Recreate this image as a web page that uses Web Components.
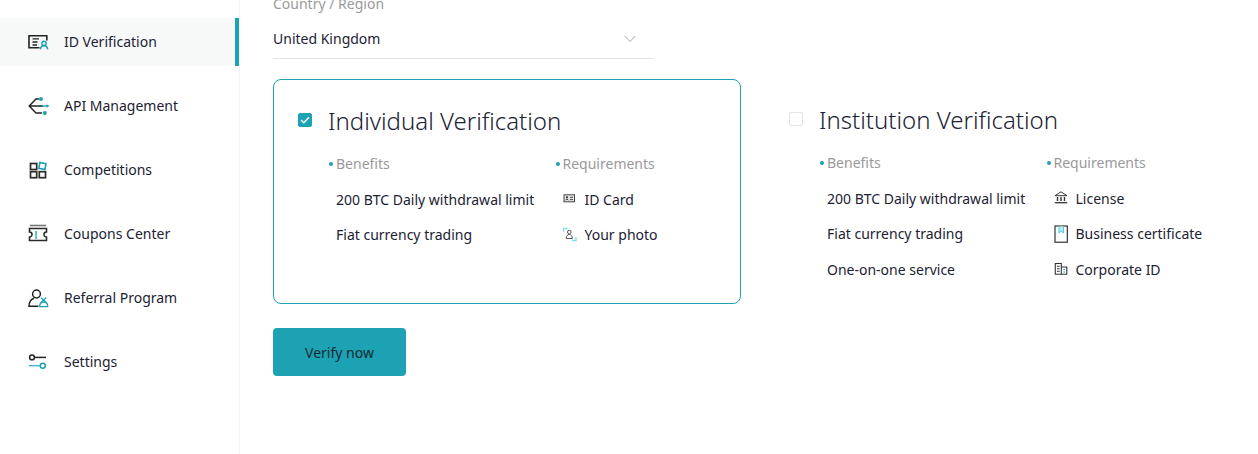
<!DOCTYPE html>
<html lang="en">
<head>
<meta charset="utf-8">
<title>ID Verification</title>
<style>
html,body{margin:0;height:454px;overflow:hidden;background:#fff;font-family:"Noto Sans",sans-serif;color:#1c2233;font-size:14px}
</style>
</head>
<body>
<kyc-app>
  <side-nav slot="nav">
    <nav-item active label="ID Verification"><svg viewBox="0 0 20 20" width="20" height="20" fill="none" overflow="visible"><path d="M11.500 15.800H1V3.800H18.800V8.500" stroke="#222" stroke-width="1.600"/><path d="M4.500 6.900H11M4.500 10H9.500M4.500 13H9" stroke="#222" stroke-width="1.400"/><circle cx="16" cy="11.300" r="2.100" stroke="#1da2b4" stroke-width="1.500"/><path d="M12.300 17.400c.2-2.400 1.700-3.700 3.700-3.700s3.500 1.300 3.700 3.700" stroke="#1da2b4" stroke-width="1.500"/></svg></nav-item>
    <nav-item label="API Management"><svg viewBox="0 0 20 20" width="20" height="20" fill="none" overflow="visible"><path d="M11 3H8L1.200 10 8 17H14M1.200 10H15" stroke="#222" stroke-width="1.400"/><path d="M14 10H19" stroke="#1da2b4" stroke-width="1.400"/><path d="M18.500 8.300 21.500 10 18.500 11.700Z" fill="#1da2b4"/><circle cx="13" cy="3" r="2" fill="#1da2b4"/><circle cx="16.800" cy="17" r="2" fill="#1da2b4"/></svg></nav-item>
    <nav-item label="Competitions"><svg viewBox="0 0 20 20" width="20" height="20" fill="none"><rect x="2.500" y="3.500" width="6.200" height="6" stroke="#2b2b2b" stroke-width="1.700"/><rect x="2.500" y="11.700" width="6.200" height="6" stroke="#2b2b2b" stroke-width="1.700"/><rect x="11.300" y="11.700" width="6.200" height="6" stroke="#2b2b2b" stroke-width="1.700"/><rect x="11.300" y="3" width="6.200" height="6" transform="rotate(10 14.400 6)" stroke="#1da2b4" stroke-width="1.600"/></svg></nav-item>
    <nav-item label="Coupons Center"><svg viewBox="0 0 20 20" width="20" height="20" fill="none"><path d="M2 1.500H18" stroke="#777" stroke-width="1.600"/><path d="M1.500 4.500H18.500V8a2.500 2.500 0 0 0 0 5V16.500H1.500V13a2.500 2.500 0 0 0 0-5Z" stroke="#2b2b2b" stroke-width="1.600"/><path d="M8 7V15" stroke="#1da2b4" stroke-width="1.300"/></svg></nav-item>
    <nav-item label="Referral Program"><svg viewBox="0 0 20 20" width="20" height="20" fill="none" overflow="visible"><circle cx="8.500" cy="6" r="3.900" stroke="#222" stroke-width="1.500"/><path d="M10.500 18.200H1c0-4.200 2.400-7.100 5-8" stroke="#222" stroke-width="1.500"/><path d="M13 9.800l5.200 4.700M18.200 9.800 13 14.500" stroke="#1da2b4" stroke-width="1.200"/><path d="M11.700 18.600c0-3 1.400-4.600 4-4.600s4 1.600 4 4.600Z" stroke="#1da2b4" stroke-width="1.300"/></svg></nav-item>
    <nav-item label="Settings"><svg viewBox="0 0 20 20" width="20" height="20" fill="none"><circle cx="4" cy="5.400" r="2.400" stroke="#222" stroke-width="1.500"/><path d="M6.500 5.400H18" stroke="#222" stroke-width="1.500"/><path d="M.8 13.700H12.300" stroke="#4fb8c6" stroke-width="1.500"/><circle cx="14.800" cy="13.700" r="2.500" stroke="#1da2b4" stroke-width="1.500"/></svg></nav-item>
  </side-nav>
  <country-select label="Country / Region" value="United Kingdom"></country-select>
  <verify-card selected title="Individual Verification">
    <benefit-list slot="benefits">
      <list-row>200 BTC Daily withdrawal limit</list-row>
      <list-row>Fiat currency trading</list-row>
    </benefit-list>
    <benefit-list slot="requirements">
      <list-row><svg slot="icon" viewBox="0 0 16 18" width="16" height="18" fill="none"><rect x="1" y="4.800" width="10.500" height="7" fill="#e6e6e6" stroke="#444" stroke-width="1"/><circle cx="4" cy="7.300" r="1.100" fill="#333"/><path d="M2.300 10.300c.3-1.300 3-1.300 3.300 0M7 7.300h3M7 9.600h3" stroke="#333" stroke-width=".9"/></svg>ID Card</list-row>
      <list-row><svg slot="icon" viewBox="0 0 16 18" width="16" height="18" fill="none"><path d="M.5 6V2.500H4.500M13 11V14.500H9" stroke="#7fdfe8" stroke-width="1.300"/><circle cx="6.300" cy="6" r="1.800" stroke="#555" stroke-width="1"/><path d="M3.300 12.500c0-2.400 1-4 3-4s3 1.600 3 4Z" stroke="#555" stroke-width="1"/></svg>Your photo</list-row>
    </benefit-list>
  </verify-card>
  <verify-card title="Institution Verification">
    <benefit-list slot="benefits">
      <list-row>200 BTC Daily withdrawal limit</list-row>
      <list-row>Fiat currency trading</list-row>
      <list-row>One-on-one service</list-row>
    </benefit-list>
    <benefit-list slot="requirements">
      <list-row><svg slot="icon" viewBox="0 0 16 18" width="16" height="18" fill="none"><path d="M7 2.800 1 6.700H13Z" stroke="#333" stroke-width="1"/><path d="M3.500 8V12M7 8V12M10.500 8V12" stroke="#333" stroke-width="1.400"/><path d="M.8 13.700H13.200" stroke="#333" stroke-width="1.300"/></svg>License</list-row>
      <list-row><svg slot="icon" viewBox="0 0 16 18" width="16" height="18" fill="none" overflow="visible"><rect x="1" y="1" width="12.300" height="16.200" stroke="#222" stroke-width="1.100"/><path d="M5 1.500V8L7.200 6 9.400 8V1.500" fill="#bdeff2" stroke="#3fd0d8" stroke-width="1"/></svg>Business certificate</list-row>
      <list-row><svg slot="icon" viewBox="0 0 16 18" width="16" height="18" fill="none"><path d="M1.300 14.200V3.500H7.300V14.200M7.300 7H12.800V14.200M.8 14.200H13.300" stroke="#333" stroke-width="1.100"/><path d="M3 6.300H5.600M3 8.800H5.600M3 11.300H5.600" stroke="#333" stroke-width="1"/><path d="M9.300 9.500H11M9.300 12H11" stroke="#1da2b4" stroke-width="1.200"/></svg>Corporate ID</list-row>
    </benefit-list>
  </verify-card>
  <primary-button slot="action">Verify now</primary-button>
</kyc-app>
<script>
function define(name, css, html, init){
  customElements.define(name, class extends HTMLElement{
    constructor(){
      super();
      const root=this.attachShadow({mode:"open"});
      root.innerHTML="<style>"+css+"</style>"+html;
    }
    connectedCallback(){ if(init) init(this, this.shadowRoot); }
  });
}
define("kyc-app",
 `:host{display:flex;height:454px;overflow:hidden}
  .main{flex:1;min-width:0;padding-left:33px;margin-top:-6px}
  .cards{display:flex;gap:24px;align-items:flex-start;margin-top:20px}
  .action{margin-top:24px}`,
 `<slot name="nav"></slot>
  <div class="main">
    <slot id="sel" name="select"></slot>
    <div class="cards"><slot></slot></div>
    <div class="action"><slot name="action"></slot></div>
  </div>`,
 (el)=>{ const s=el.querySelector("country-select"); if(s) s.slot="select"; });
define("side-nav",
 `:host{display:flex;flex-direction:column;gap:16px;box-sizing:border-box;width:240px;height:454px;padding-top:18px;border-right:1px solid #f3f4f4;flex:none}`,
 `<slot></slot>`);
define("nav-item",
 `:host{display:flex;align-items:center;gap:16px;height:48px;padding-left:28px;box-sizing:border-box;font-size:14px;color:#1c2233;line-height:20px}
  :host([active]){background:#f7f9f9;border-right:4px solid #1da2b4}
  .i{display:flex;width:20px;height:20px}`,
 `<span class="i"><slot></slot></span><span id="t"></span>`,
 (el,r)=>{ r.getElementById("t").textContent=el.getAttribute("label"); });
define("country-select",
 `:host{display:block;width:380px}
  .l{height:20px;line-height:20px;color:#9a9a9a;font-size:14px}
  .s{height:45px;box-sizing:border-box;border-bottom:1px solid #e3e3e3;display:flex;align-items:center;justify-content:space-between;padding:5px 17px 0 0;line-height:20px;color:#1c2233}
  svg{display:block}`,
 `<div class="l" id="l"></div><div class="s"><span id="v"></span><svg width="12" height="8" viewBox="0 0 12 8" fill="none"><path d="M.7 1 6 6.500 11.300 1" stroke="#a4a4a4" stroke-width="1"/></svg></div>`,
 (el,r)=>{ r.getElementById("l").textContent=el.getAttribute("label"); r.getElementById("v").textContent=el.getAttribute("value"); });
define("verify-card",
 `:host{display:block;box-sizing:border-box;width:466px;padding:24px 24px 0;min-height:224px;color:#1c2233}
  :host([selected]){width:468px;height:225px;border:1px solid #1da2b4;border-radius:8px}
  .h{display:flex;align-items:center;height:34px}
  .c{width:14px;height:14px;box-sizing:border-box;border:1px solid #e4e4e4;border-radius:2px;margin:0 16px 2px 0;flex:none;display:flex;align-items:center;justify-content:center}
  :host([selected]) .c{background:#1da2b4;border-color:#1da2b4}
  .c svg{display:none}
  :host([selected]) .c svg{display:block}
  .t{font-size:24px;font-weight:300;line-height:34px;color:#1c2233}
  .g{display:grid;grid-template-columns:226.5px 1fr;margin:8px 0 0 30px}`,
 `<div class="h"><span class="c"><svg width="10" height="8" viewBox="0 0 10 8" fill="none"><path d="M1 4 3.800 6.700 9 1.300" stroke="#fff" stroke-width="1.400"/></svg></span><span class="t" id="t"></span></div>
  <div class="g"><section-col head="Benefits"><slot name="benefits"></slot></section-col><section-col head="Requirements"><slot name="requirements"></slot></section-col></div>`,
 (el,r)=>{ r.getElementById("t").textContent=el.getAttribute("title"); });
define("section-col",
 `:host{display:block}
  .h{height:35.5px;line-height:36px;color:#9a9a9a;font-size:14px;display:flex;align-items:flex-start;white-space:nowrap}
  .d{width:4px;height:4px;border-radius:50%;background:#1da2b4;margin:16px 3px 0 1px;flex:none}`,
 `<div class="h"><span class="d"></span><span id="h"></span></div><slot></slot>`,
 (el,r)=>{ r.getElementById("h").textContent=el.getAttribute("head"); });
define("benefit-list",`:host{display:block}`,`<slot></slot>`);
define("list-row",
 `:host{display:flex;align-items:center;height:35.5px;padding-left:8px;white-space:nowrap;font-size:14px;color:#1c2233}
  .i{display:none;width:16px;height:18px;margin-right:6px;flex:none}
  :host(.has) .i{display:flex}`,
 `<span class="i"><slot name="icon"></slot></span><span><slot></slot></span>`,
 (el)=>{ if(el.querySelector("svg")) el.classList.add("has"); });
define("primary-button",
 `:host{display:inline-flex;align-items:center;justify-content:center;width:133px;height:48px;background:#1da2b4;border-radius:4px;color:#142a33;font-size:14px}`,
 `<slot></slot>`);
</script>
</body>
</html>
